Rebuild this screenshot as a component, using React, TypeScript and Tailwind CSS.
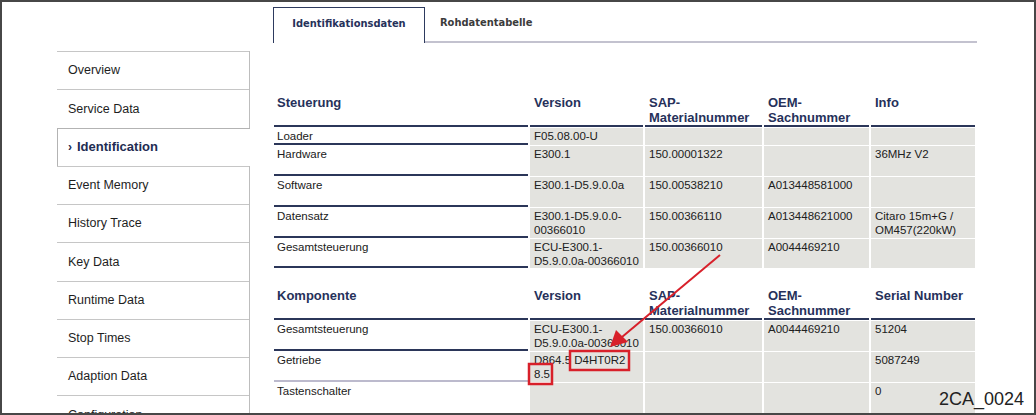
const navItems = [
  "Overview",
  "Service Data",
  "Identification",
  "Event Memory",
  "History Trace",
  "Key Data",
  "Runtime Data",
  "Stop Times",
  "Adaption Data",
  "Configuration",
];

type Row = { label: string; cells: string[]; h: string; line?: string };

const steuerung: Row[] = [
  { label: "Loader", cells: ["F05.08.00-U", "", "", ""], h: "h-[17px]" },
  { label: "Hardware", cells: ["E300.1", "150.00001322", "", "36MHz V2"], h: "h-[30px]" },
  { label: "Software", cells: ["E300.1-D5.9.0.0a", "150.00538210", "A013448581000", ""], h: "h-[30px]" },
  {
    label: "Datensatz",
    cells: ["E300.1-D5.9.0.0-\n00366010", "150.00366110", "A013448621000", "Citaro 15m+G /\nOM457(220kW)"],
    h: "h-[30px]",
  },
  {
    label: "Gesamtsteuerung",
    cells: ["ECU-E300.1-\nD5.9.0.0a-00366010", "150.00366010", "A0044469210", ""],
    h: "h-[29px]",
  },
];

const komponente: Row[] = [
  {
    label: "Gesamtsteuerung",
    cells: ["ECU-E300.1-\nD5.9.0.0a-00366010", "150.00366010", "A0044469210", "51204"],
    h: "h-[30px]",
  },
  {
    label: "Getriebe",
    cells: ["D864.5 D4HT0R2\n8.5", "", "", "5087249"],
    h: "h-[30px]",
    line: "border-[#bcbacd]",
  },
  { label: "Tastenschalter", cells: ["", "", "", "0"], h: "h-[30px]", line: "border-transparent" },
];

function SideNav() {
  return (
    <nav className="mt-[49px] ml-[55px] w-[193px] shrink-0 border-r border-[#bdbdbd]">
      {navItems.map((item) =>
        item === "Identification" ? (
          <div
            key={item}
            className="relative z-10 -mr-px flex h-[38.25px] items-center border-t border-l border-[#b3b3b3] bg-white pl-[10px] text-[13px] font-bold text-[#222c52]"
          >
            <span className="mr-[5px] text-[12px]">›</span>
            {item}
          </div>
        ) : (
          <div
            key={item}
            className="flex h-[38.25px] items-center border-t border-[#c6c6c6] pl-[11px] text-[12.5px] text-[#1e1e1e]"
          >
            {item}
          </div>
        ),
      )}
    </nav>
  );
}

function Tabs() {
  return (
    <div className="flex h-[36px] font-['DejaVu_Sans_Condensed','DejaVu_Sans',sans-serif] text-[11px] font-bold">
      <div className="flex w-[152px] justify-center border-x border-t border-[#2d3a5e] pt-[8px] text-[#27325a]">
        Identifikationsdaten
      </div>
      <div className="flex-1 border-b-2 border-[#c3c2cf] pt-[8px] pl-[15px] text-[#3b3b3b]">
        Rohdatentabelle
      </div>
    </div>
  );
}

function DataTable({ title, last, rows }: { title: string; last: string; rows: Row[] }) {
  const heads = [title, "Version", "SAP-\nMaterialnummer", "OEM-\nSachnummer", last];
  return (
    <table className="w-[705px] table-fixed border-separate border-spacing-x-[2px] border-spacing-y-[1px] text-left">
      <colgroup>
        <col className="w-[254px]" />
        <col className="w-[113px]" />
        <col className="w-[117px]" />
        <col className="w-[105px]" />
        <col className="w-[104px]" />
      </colgroup>
      <thead>
        <tr className="h-[38px]">
          {heads.map((h, i) => (
            <th
              key={h}
              className={`border-b-2 border-[#2b3659] pt-[6px] align-top text-[13px] leading-[15px] font-bold whitespace-pre text-[#26315a] ${
                i === 0 ? "pl-[3px]" : "pl-[4px]"
              }`}
            >
              {h}
            </th>
          ))}
        </tr>
      </thead>
      <tbody className="text-[11.5px] leading-[14px] text-[#202020]">
        {rows.map((r) => (
          <tr key={r.label} className={r.h}>
            <td className={`border-b-2 pt-[1px] pl-[3px] align-top ${r.line ?? "border-[#2b3659]"}`}>{r.label}</td>
            {r.cells.map((c, i) => (
              <td key={i} className="bg-[#e3e3df] px-[4px] pt-[1px] align-top whitespace-pre">
                {c}
              </td>
            ))}
          </tr>
        ))}
      </tbody>
    </table>
  );
}

export default function App() {
  return (
    <div className="relative h-[415px] w-[1036px] overflow-hidden border-2 border-[#474747] bg-white font-['Liberation_Sans',Arial,sans-serif]">
      <div className="flex h-full">
        <SideNav />
        <main className="ml-[23px] w-[704px] pt-[5px]">
          <Tabs />
          <div className="-ml-px">
            <div className="mt-[45px]">
              <DataTable title="Steuerung" last="Info" rows={steuerung} />
            </div>
            <div className="mt-[12px]">
              <DataTable title="Komponente" last="Serial Number" rows={komponente} />
            </div>
          </div>
        </main>
      </div>

      {/* callout: arrow and boxes around the gearbox version */}
      <svg className="pointer-events-none absolute -top-[2px] -left-[2px] h-[415px] w-[1036px]" viewBox="0 0 1036 415">
        <g fill="none" stroke="#d8202a" strokeWidth={2.5}>
          <rect x={570} y={351} width={59} height={19} />
          <rect x={529} y={364} width={23} height={20} />
          <line x1={720} y1={255} x2={622} y2={337} strokeWidth={2} />
        </g>
        <polygon points="610,347 616,330 628,342" fill="#d8202a" />
      </svg>

      <span className="absolute top-[388px] left-[937px] text-[18px] leading-none text-[#222]">2CA_0024</span>
    </div>
  );
}
